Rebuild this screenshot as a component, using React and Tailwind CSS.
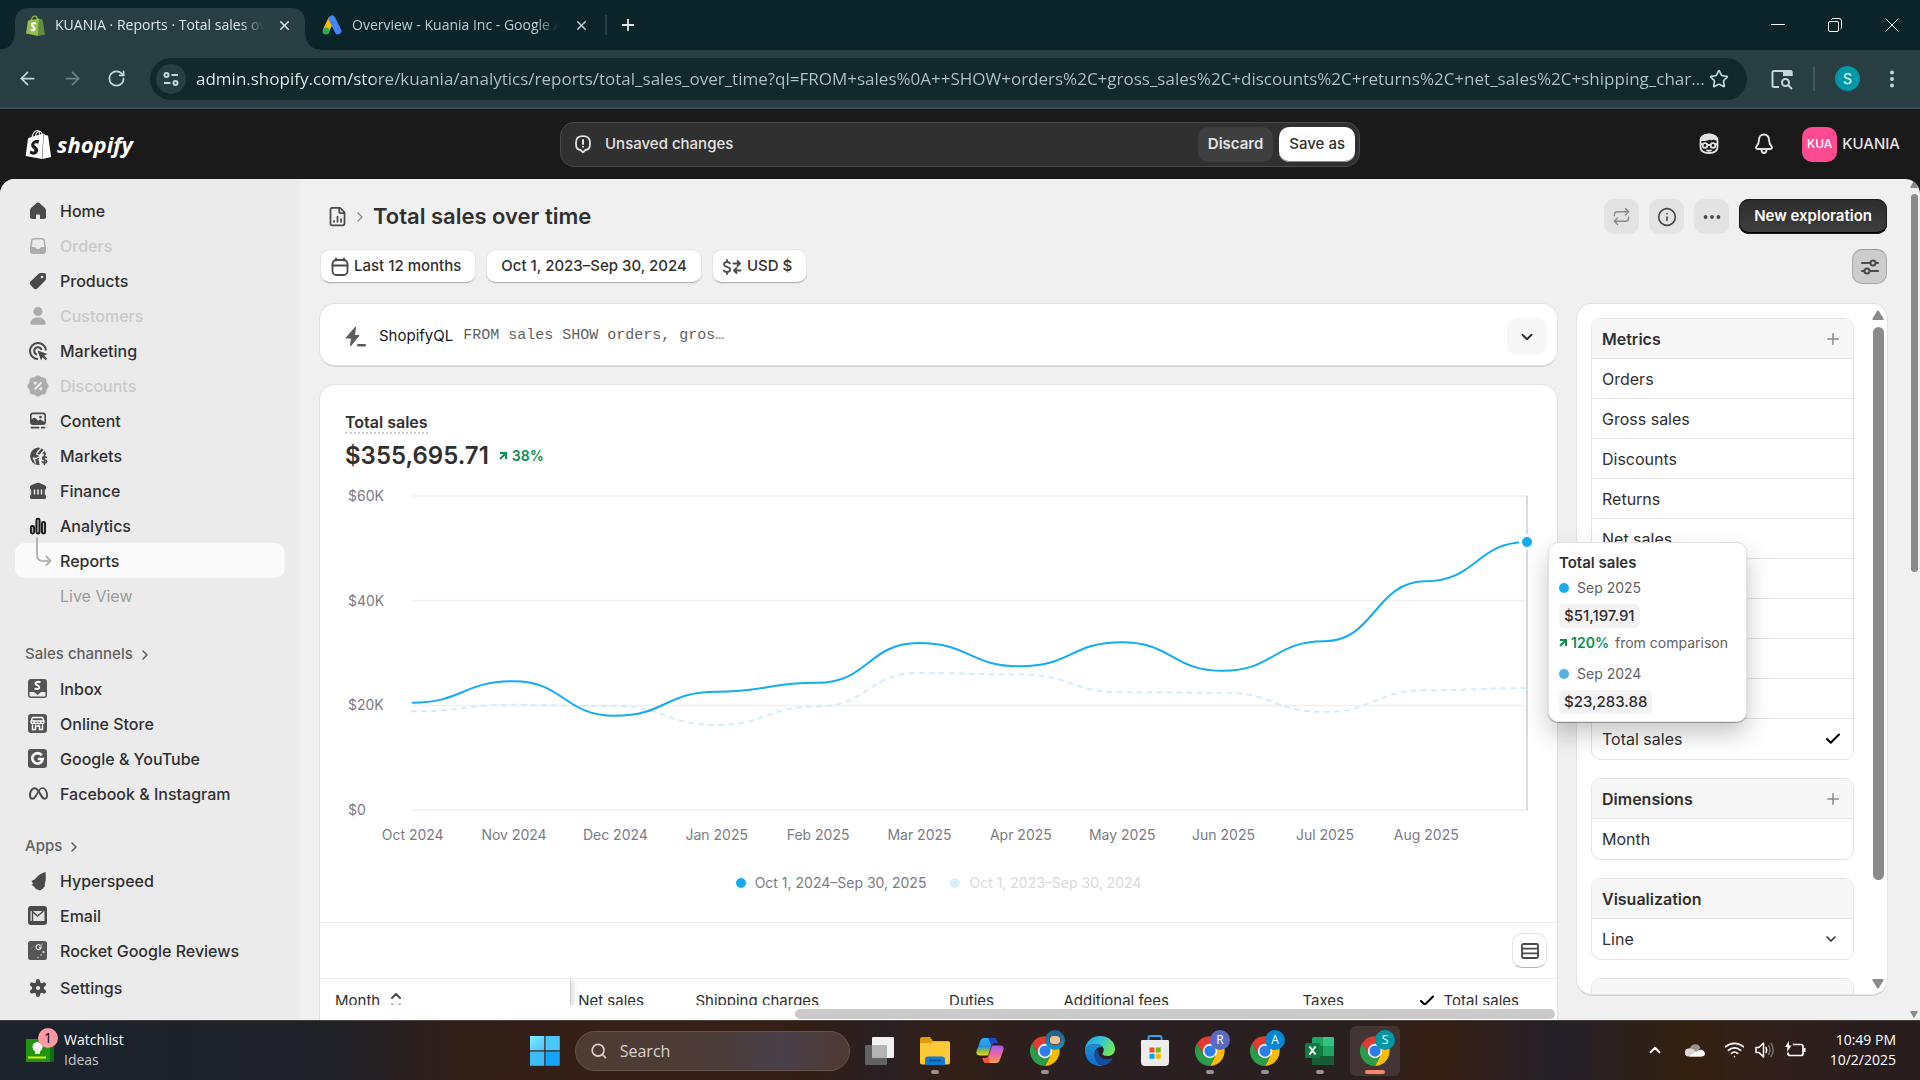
import React, { useState } from 'react';
import {
  ArrowLeft,
  ArrowRight,
  Check,
  ChevronDown,
  ChevronRight,
  ChevronUp,
  Ellipsis,
  EllipsisVertical,
  FileChartColumn,
  Info,
  Plus,
  Repeat,
  RotateCw,
  Search,
  Star,
  Wifi,
  X
} from 'lucide-react';
import { FaMeta } from 'react-icons/fa6';
import { SiShopify } from 'react-icons/si';
import { RiDiscountPercentFill } from 'react-icons/ri';

const NAV_ITEMS = [
  { label: 'Home', icon: HomeIcon },
  { label: 'Orders', icon: OrdersIcon, disabled: true },
  { label: 'Products', icon: TagIcon },
  { label: 'Customers', icon: PersonIcon, disabled: true },
  { label: 'Marketing', icon: TargetIcon },
  { label: 'Discounts', icon: DiscountIcon, disabled: true },
  { label: 'Content', icon: ContentIcon },
  { label: 'Markets', icon: MarketsIcon },
  { label: 'Finance', icon: BankIcon },
  { label: 'Analytics', icon: BarsIcon }
];

const CHANNELS = [
  { label: 'Inbox', icon: InboxIcon },
  { label: 'Online Store', icon: StoreIcon },
  { label: 'Google & YouTube', icon: GoogleIcon },
  { label: 'Facebook & Instagram', icon: MetaIcon }
];

const APPS = [
  { label: 'Hyperspeed', icon: HyperspeedIcon },
  { label: 'Email', icon: MailIcon },
  { label: 'Rocket Google Reviews', icon: RocketIcon }
];

const METRICS = [
  'Orders',
  'Gross sales',
  'Discounts',
  'Returns',
  'Net sales',
  'Shipping charges',
  'Duties',
  'Additional fees',
  'Taxes',
  'Total sales'
];

const MONTHS = [
  'Oct 2024',
  'Nov 2024',
  'Dec 2024',
  'Jan 2025',
  'Feb 2025',
  'Mar 2025',
  'Apr 2025',
  'May 2025',
  'Jun 2025',
  'Jul 2025',
  'Aug 2025'
];

const CURRENT = [20500, 24600, 18000, 22600, 24300, 31900, 27450, 32050, 26600, 32250, 43700, 51198];
const PREVIOUS = [18850, 20100, 19850, 16250, 19800, 26200, 25900, 22500, 22400, 18750, 22900, 23284];

const PLOT_W = 1115;
const PLOT_H = 314;

const toPath = (values) => {
  const step = PLOT_W / (values.length - 1);
  const y = (v) => PLOT_H - (v / 60000) * PLOT_H;
  return values.reduce((d, v, i) => {
    if (i === 0) return `M0 ${y(v)}`;
    const mid = (i - 0.5) * step;
    return `${d} C${mid} ${y(values[i - 1])} ${mid} ${y(v)} ${i * step} ${y(v)}`;
  }, '');
};

export default function App() {
  return (
    <div className="flex h-screen flex-col overflow-hidden bg-[#1a1a1a] font-['Inter',sans-serif] text-base text-[#303030]">
      <BrowserTabs />
      <BrowserToolbar />
      <AdminHeader />
      <div className="flex min-h-0 flex-1 overflow-hidden rounded-t-[15px] bg-[#f0f0f0]">
        <Sidebar />
        <Report />
        <PageScrollbar />
      </div>
      <Taskbar />
    </div>
  );
}

/* ---------- Browser ---------- */

function BrowserTabs() {
  return (
    <div className="flex h-[50px] shrink-0 items-center bg-[#0b2429] pl-[15px] font-['Open_Sans','Noto_Sans',sans-serif] text-sm text-[#dfe7e7]">
      <div className="relative flex h-[42px] w-[290px] items-center self-end rounded-t-[13px] bg-[#283e43] pb-2 pl-[11px] pr-3">
        <span className="absolute -left-[15px] bottom-0 size-[15px] bg-[radial-gradient(circle_at_0_0,transparent_14px,#283e43_15px)]" />
        <span className="absolute -right-[15px] bottom-0 size-[15px] bg-[radial-gradient(circle_at_100%_0,transparent_14px,#283e43_15px)]" />
        <ShopifyFavicon />
        <span className="ml-2.5 w-[210px] overflow-hidden whitespace-nowrap [mask-image:linear-gradient(90deg,#000_185px,transparent)]">
          KUANIA · Reports · Total sales over time
        </span>
        <button aria-label="Close tab" className="ml-3">
          <X className="size-[15px]" strokeWidth={2.4} />
        </button>
      </div>
      <div className="flex h-[42px] w-[300px] items-center self-end pb-2 pl-[17px] text-[#b9cdd0]">
        <GoogleAdsIcon />
        <span className="ml-2.5 w-[206px] overflow-hidden whitespace-nowrap [mask-image:linear-gradient(90deg,#000_185px,transparent)]">
          Overview - Kuania Inc - Google Ads
        </span>
        <button aria-label="Close tab" className="ml-4">
          <X className="size-[15px]" strokeWidth={2.4} />
        </button>
      </div>
      <span className="h-5 w-0.5 bg-[#283e43]" />
      <button aria-label="New tab" className="ml-3">
        <Plus className="size-[18px]" strokeWidth={2.4} />
      </button>
      <div className="ml-auto flex text-white">
        <button aria-label="Minimize" className="flex w-[57px] justify-center">
          <svg width="14" height="14" viewBox="0 0 14 14" stroke="currentColor">
            <path d="M0 6.5h14" />
          </svg>
        </button>
        <button aria-label="Restore" className="flex w-[57px] justify-center">
          <svg width="14" height="14" viewBox="0 0 14 14" fill="none" stroke="currentColor">
            <rect x=".5" y="3.5" width="10" height="10" rx="1.5" />
            <path d="M3.5 1.5q.3-1 1.500-1H11a2.500 2.500 0 0 1 2.500 2.500v6.500q0 1.200-1 1.500" />
          </svg>
        </button>
        <button aria-label="Close" className="flex w-[57px] justify-center">
          <svg width="14" height="14" viewBox="0 0 14 14" stroke="currentColor">
            <path d="M.5.5l13 13M13.500.5l-13 13" />
          </svg>
        </button>
      </div>
    </div>
  );
}

function BrowserToolbar() {
  return (
    <div className="flex h-[59px] shrink-0 items-center border-b-2 border-[#3e4e54] bg-[#283e43] pl-[17px] text-[#c4d6d8]">
      <button aria-label="Back">
        <ArrowLeft className="size-[21px]" />
      </button>
      <button aria-label="Forward" className="ml-6 text-[#6d8084]">
        <ArrowRight className="size-[21px]" />
      </button>
      <button aria-label="Reload" className="ml-6">
        <RotateCw className="size-[19px]" strokeWidth={2.2} />
      </button>
      <div className="ml-6 flex h-[42px] flex-1 items-center rounded-full bg-[#11282d] pl-1.5 pr-[18px]">
        <button aria-label="Site information" className="flex size-[30px] items-center justify-center rounded-full bg-[#283e43]">
          <svg width="16" height="16" viewBox="0 0 16 16" fill="none" stroke="currentColor" strokeWidth="2">
            <circle cx="3.500" cy="4" r="2" />
            <path d="M8.500 4H15M1 12h6.500" />
            <circle cx="12.500" cy="12" r="2" />
          </svg>
        </button>
        <input
          aria-label="Address"
          className="ml-2.5 min-w-0 flex-1 bg-[linear-gradient(90deg,#e9f0f0_178px,#b3c3c5_178px)] bg-clip-text font-['Open_Sans','Noto_Sans',sans-serif] text-[17px] text-transparent outline-none"
          defaultValue="admin.shopify.com/store/kuania/analytics/reports/total_sales_over_time?ql=FROM+sales%0A++SHOW+orders%2C+gross_sales%2C+discounts%2C+returns%2C+net_sales%2C+shipping_char..."
        />
        <button aria-label="Bookmark">
          <Star className="size-5" />
        </button>
      </div>
      <button aria-label="Side panel" className="ml-6">
        <svg width="22" height="22" viewBox="0 0 22 22" fill="none" stroke="currentColor" strokeWidth="2">
          <path d="M8 19H3a1.500 1.500 0 0 1-1.500-1.500v-13A1.500 1.500 0 0 1 3 3h16a1.500 1.500 0 0 1 1.500 1.500V8" />
          <path d="M12 2h7.500a2 2 0 0 1 2 2v4H12z" fill="currentColor" stroke="none" />
          <circle cx="14.500" cy="14.500" r="3.500" />
          <path d="M17 17l4 4" />
        </svg>
      </button>
      <span className="ml-5 h-6 w-0.5 bg-[#40585d]" />
      <button aria-label="Profile" className="ml-5 flex size-[25px] items-center justify-center rounded-full bg-[#0097a7] text-sm text-white">
        S
      </button>
      <button aria-label="Chrome menu" className="ml-[21px] mr-[17px]">
        <EllipsisVertical className="size-[22px]" strokeWidth={2.4} />
      </button>
    </div>
  );
}

/* ---------- Shopify admin ---------- */

function AdminHeader() {
  return (
    <header className="grid h-[70px] shrink-0 grid-cols-[1fr_auto_1fr] items-center bg-[#1a1a1a] px-5 text-[#e3e3e3]">
      <a href="#" className="flex items-center gap-1 pl-1 text-white">
        <SiShopify className="size-[29px]" />
        <span className="font-['Open_Sans','Noto_Sans',sans-serif] text-[22px] font-bold italic leading-8">shopify</span>
      </a>
      <div className="flex h-[45px] w-[800px] items-center rounded-[14px] border border-[#4a4a4a] bg-[#303030] pl-3 pr-1 text-[15px]">
        <svg width="20" height="20" viewBox="0 0 20 20" fill="none" stroke="currentColor" strokeWidth="1.800" strokeLinecap="round">
          <path d="M10 2.200c5.200 0 7 1.800 7 7s-1.200 6.300-4.500 6.800L10 18.300 7.500 16C4.200 15.500 3 14.400 3 9.200s1.800-7 7-7z" strokeLinejoin="round" />
          <path d="M10 6v4M10 12.700v.1" strokeWidth="2" />
        </svg>
        <span className="ml-3 font-medium">Unsaved changes</span>
        <button className="ml-auto h-[35px] rounded-[10px] bg-[#3f3f3f] px-2.5 font-semibold">Discard</button>
        <button className="ml-1.5 h-[35px] rounded-[10px] bg-white px-2.5 font-medium text-[#303030] shadow-[inset_0_-1px_0_#8a8a8a]">
          Save as
        </button>
      </div>
      <div className="flex items-center justify-end">
        <button aria-label="Sidekick">
          <SidekickIcon />
        </button>
        <button aria-label="Notifications" className="ml-[35px]">
          <svg width="20" height="22" viewBox="0 0 20 22" fill="none" stroke="currentColor" strokeWidth="1.900" strokeLinejoin="round">
            <path d="M10 1.500c-3 0-5 2.200-5 5.200 0 3.200-.8 4.800-2.600 6.800-.7.800-.3 2.500 1 2.500h13.200c1.300 0 1.700-1.700 1-2.500-1.800-2-2.600-3.600-2.600-6.800 0-3-2-5.200-5-5.200z" />
            <path d="M7.500 16.500c0 1.800.9 3.500 2.500 3.500s2.500-1.700 2.500-3.500" />
          </svg>
        </button>
        <button className="ml-7 flex items-center gap-[5px] text-[15px] font-medium">
          <span className="flex size-[35px] items-center justify-center rounded-[10px] bg-[#fd4b92] text-xs font-medium text-white">KUA</span>
          KUANIA
        </button>
      </div>
    </header>
  );
}

function NavRow({ item }) {
  const Icon = item.icon;
  return (
    <a
      href="#"
      className={`flex h-[35px] items-center gap-3 rounded-[10px] pl-[13px] font-medium ${item.disabled ? 'text-[#c9c9c9]' : 'text-[#303030]'}`}
    >
      <span className={`flex size-5 items-center justify-center ${item.disabled ? 'text-[#acacac]' : 'text-[#4a4a4a]'}`}>
        <Icon />
      </span>
      {item.label}
    </a>
  );
}

function SectionLabel({ children }) {
  return (
    <button className="flex h-[35px] items-center gap-1 pl-2.5 pt-0.5 text-[15px] font-medium text-[#616161]">
      {children}
      <ChevronRight className="size-4" strokeWidth={2.4} />
    </button>
  );
}

function Sidebar() {
  return (
    <nav className="flex w-[300px] shrink-0 flex-col overflow-hidden bg-[#ebebeb] px-[15px] pt-3.5">
      {NAV_ITEMS.map((item) => (
        <NavRow key={item.label} item={item} />
      ))}
      <a href="#" className="relative flex h-[35px] items-center rounded-[10px] bg-[#fafafa] pl-[45px] font-medium">
        <svg className="absolute -top-1.5 left-[21px]" width="18" height="30" viewBox="0 0 18 30" fill="none" stroke="#b5b5b5" strokeWidth="2" strokeLinecap="round" strokeLinejoin="round">
          <path d="M1 1v17q0 6 6 6h7.500M10.500 19.500l4 4.500-4 4" />
        </svg>
        Reports
      </a>
      <a href="#" className="flex h-[35px] items-center pl-[45px] text-[#9b9b9b]">
        Live View
      </a>
      <div className="mt-[23px] flex flex-col">
        <SectionLabel>Sales channels</SectionLabel>
        {CHANNELS.map((item) => (
          <NavRow key={item.label} item={item} />
        ))}
      </div>
      <div className="mt-[17px] flex flex-col">
        <SectionLabel>Apps</SectionLabel>
        {APPS.map((item) => (
          <NavRow key={item.label} item={item} />
        ))}
      </div>
      <div className="mt-0.5">
        <NavRow item={{ label: 'Settings', icon: GearIcon }} />
      </div>
    </nav>
  );
}

const cardShadow = 'shadow-[0_0_0_1px_#e3e3e3,0_2px_0_0_#cfcfcf]';
const pill =
  'flex h-[35px] items-center rounded-[10px] bg-white text-[15px] font-medium shadow-[inset_0_0_0_1px_#e3e3e3,inset_0_-2px_0_#b5b5b5]';
const iconButton = 'flex size-[35px] items-center justify-center rounded-[10px] bg-[#e3e3e3]';

function Report() {
  return (
    <main className="flex min-w-0 flex-1 flex-col pl-5 pr-[21px] pt-5">
      <div className="flex h-[35px] shrink-0 items-center">
        <a href="#" aria-label="Reports" className="ml-[7px] text-[#4a4a4a]">
          <FileChartColumn className="size-[21px]" />
        </a>
        <ChevronRight className="ml-1 size-4 text-[#8a8a8a]" />
        <h1 className="ml-[5px] text-[22px] font-semibold">Total sales over time</h1>
        <div className="ml-auto flex gap-2.5">
          <button aria-label="Refresh" className={iconButton} disabled>
            <Repeat className="size-[19px] text-[#8a8a8a]" strokeWidth={1.8} />
          </button>
          <button aria-label="About this report" className={iconButton}>
            <Info className="size-5 text-[#4a4a4a]" />
          </button>
          <button aria-label="More actions" className={iconButton}>
            <Ellipsis className="size-[22px] text-[#4a4a4a]" strokeWidth={2.2} />
          </button>
          <button className="h-[35px] rounded-[10px] bg-linear-to-b from-[#2c2c2c] to-[#404040] px-[15px] text-[15px] font-semibold text-white shadow-[inset_0_0_0_1px_#1a1a1a,inset_0_-2px_0_#000]">
            New exploration
          </button>
        </div>
      </div>

      <div className="mt-[15px] flex shrink-0 gap-2.5">
        <button className={`${pill} gap-[5px] px-[11px] pr-[15px]`}>
          <CalendarIcon />
          Last 12 months
        </button>
        <button className={`${pill} px-[15px]`}>Oct 1, 2023–Sep 30, 2024</button>
        <button className={`${pill} gap-[5px] px-[11px] pr-[15px]`}>
          <CurrencyIcon />
          USD $
        </button>
        <button aria-label="Configuration" className="ml-auto flex size-[35px] items-center justify-center rounded-[10px] border border-[#a8a8a8] border-t-[#9a9a9a] bg-[#cccccc]">
          <svg width="20" height="20" viewBox="0 0 20 20" fill="none" stroke="#4a4a4a" strokeWidth="2" strokeLinecap="round">
            <path d="M2 6h8M16 6h2M2 14h2M10 14h8" />
            <circle cx="13" cy="6" r="2.500" />
            <circle cx="7" cy="14" r="2.500" />
          </svg>
        </button>
      </div>

      <div className="mt-5 flex min-h-0 flex-1 gap-5">
        <div className="relative z-10 flex min-w-0 flex-1 flex-col gap-5">
          <QueryCard />
          <ChartCard />
        </div>
        <ConfigPanel />
      </div>
    </main>
  );
}

function QueryCard() {
  return (
    <section className={`flex h-[61px] shrink-0 items-center rounded-[15px] bg-white pl-[25px] pr-2.5 pt-1 ${cardShadow}`}>
      <svg width="22" height="20" viewBox="0 0 22 20" fill="#5c5c5c">
        <path d="M10.500 0L1 11h5.500L5.500 19 14 8.500H9.500z" stroke="#5c5c5c" strokeLinejoin="round" />
        <rect x="12" y="17" width="9" height="2.500" rx="1.200" />
      </svg>
      <span className="ml-3 text-[15px] text-[#1a1a1a]">ShopifyQL</span>
      <code className="ml-2.5 font-['Liberation_Mono',monospace] text-[15px] text-[#616161]">FROM sales SHOW orders, gros…</code>
      <button aria-label="Expand query" className="ml-auto flex h-[37px] w-10 items-center justify-center rounded-[10px] bg-[#f7f7f7]">
        <ChevronDown className="size-[18px]" strokeWidth={2.6} />
      </button>
    </section>
  );
}

function ChartCard() {
  return (
    <section className={`flex min-h-0 flex-1 flex-col rounded-t-[15px] bg-white ${cardShadow}`}>
      <div className="shrink-0 px-[25px] pt-[27px]">
        <h2 className="w-fit border-b-2 border-dotted border-[#cccccc] leading-5 font-semibold">Total sales</h2>
        <div className="mt-1.5 flex h-8 items-center gap-2.5">
          <span className="text-2xl font-semibold">$355,695.71</span>
          <span className="flex items-center gap-[5px] text-sm font-semibold text-[#0a8f4f]">
            <TrendArrow />
            38%
          </span>
        </div>
      </div>

      <div className="mt-6 flex shrink-0 pl-7 pr-[30px] text-sm text-[#7b7b85]">
        <div className="-my-2.5 flex w-16 shrink-0 flex-col justify-between">
          <span>$60K</span>
          <span>$40K</span>
          <span>$20K</span>
          <span>$0</span>
        </div>
        <div className="relative flex-1">
          <svg className="block h-[314px] w-full overflow-visible" viewBox={`0 0 ${PLOT_W} ${PLOT_H}`} preserveAspectRatio="none" fill="none">
            {[0, 104.5, 209.5, 314].map((y) => (
              <path key={y} d={`M0 ${y}H${PLOT_W}`} stroke="#efefef" strokeWidth="1.500" />
            ))}
            <path d={`M${PLOT_W} 0V${PLOT_H}`} stroke="#d9d9d9" strokeWidth="2" />
            <path d={toPath(PREVIOUS)} stroke="#d3ecfb" strokeWidth="2" strokeDasharray="4 6" strokeLinecap="round" />
            <path d={toPath(CURRENT)} stroke="#13acf0" strokeWidth="2" />
            <circle cx={PLOT_W} cy="46" r="6.500" fill="#13acf0" stroke="#fff" strokeWidth="3" />
          </svg>
          <ChartTooltip />
        </div>
      </div>

      <div className="ml-[42px] mr-20 mt-[15px] flex shrink-0 text-center text-sm text-[#7b7b85]">
        {MONTHS.map((month) => (
          <span key={month} className="flex-1 whitespace-nowrap">
            {month}
          </span>
        ))}
      </div>

      <div className="mt-7 flex shrink-0 justify-center gap-6 pb-[29px] text-sm text-[#7b7b85]">
        <span className="flex items-center gap-[9px]">
          <i className="size-2.5 rounded-full bg-[#13acf0]" />
          Oct 1, 2024–Sep 30, 2025
        </span>
        <span className="flex items-center gap-[9px] text-[#d9d9db]">
          <i className="size-2.5 rounded-full bg-[#d9eefb]" />
          Oct 1, 2023–Sep 30, 2024
        </span>
      </div>

      <div className="flex shrink-0 justify-end border-t border-[#ebebeb] p-2.5">
        <button aria-label="Table layout" className="flex size-[35px] items-center justify-center rounded-[10px] border border-[#e3e3e3] border-b-[#b5b5b5]">
          <svg width="18" height="16" viewBox="0 0 18 16" fill="none" stroke="#4a4a4a" strokeWidth="1.800">
            <rect x="1" y="1" width="16" height="14" rx="1.500" />
            <path d="M1 5.700h16M1 10.300h16" />
          </svg>
        </button>
      </div>

      <div className="min-h-0 flex-1 overflow-hidden border-t border-[#ebebeb]">
        <table className="w-full table-fixed text-[15px]">
          <thead>
            <tr className="h-11 text-right">
              <th className="pl-[15px] text-left font-normal shadow-[1px_0_0_#d0d0d0,3px_0_6px_#d9d9d9]">
                <span className="flex items-center gap-2.5">
                  Month
                  <svg width="12" height="16" viewBox="0 0 12 16" fill="none" strokeWidth="2" strokeLinecap="round" strokeLinejoin="round">
                    <path d="M2 5l4-4 4 4" stroke="#4a4a4a" />
                    <path d="M2 11l4 4 4-4" stroke="#b5b5b5" />
                  </svg>
                </span>
              </th>
              <th className="w-[82px] pr-2 font-normal">Net sales</th>
              <th className="w-[175px] pr-2 font-normal">Shipping charges</th>
              <th className="w-[175px] pr-2 font-normal">Duties</th>
              <th className="w-[175px] pr-2 font-normal">Additional fees</th>
              <th className="w-[175px] pr-2 font-normal">Taxes</th>
              <th className="w-[205px] pr-[38px] font-normal">
                <span className="flex items-center justify-end gap-2">
                  <Check className="size-[18px] text-black" strokeWidth={2.8} />
                  Total sales
                </span>
              </th>
            </tr>
          </thead>
        </table>
      </div>
      <div className="flex h-[15px] shrink-0 items-end justify-end pb-px pr-0.5">
        <span className="h-2.5 w-8/13 rounded-full bg-[#c9c9c9]" />
      </div>
    </section>
  );
}

function ChartTooltip() {
  return (
    <div className="absolute left-full top-[46px] ml-[21px] flex w-[199px] flex-col rounded-[10px] border border-[#e3e3e3] bg-white px-2.5 pb-[7px] pt-2.5 text-sm text-[#616161] shadow-[0_1px_1px_rgba(0,0,0,0.3),0_12px_24px_rgba(0,0,0,0.22)]">
      <span className="text-[15px] font-semibold leading-5 text-[#303030]">Total sales</span>
      <span className="mt-[5px] flex items-center gap-2">
        <i className="size-2.5 rounded-full bg-[#13acf0]" />
        Sep 2025
      </span>
      <span className="mt-1.5 w-fit rounded-[5px] bg-[#f3f3f3] px-[5px] text-[15px] font-medium leading-6 text-[#303030]">$51,197.91</span>
      <span className="mt-[5px] flex items-center">
        <TrendArrow />
        <b className="ml-1 font-semibold text-[#0a8f4f]">120%</b>
        <span className="ml-1.5">from comparison</span>
      </span>
      <span className="mt-[11px] flex items-center gap-2">
        <i className="size-2.5 rounded-full bg-[#52b3e3]" />
        Sep 2024
      </span>
      <span className="mt-1.5 w-fit rounded-[5px] bg-[#f3f3f3] px-[5px] text-[15px] font-medium leading-6 text-[#303030]">$23,283.88</span>
    </div>
  );
}

const panelBox = 'shrink-0 divide-y divide-[#e3e3e3] overflow-hidden rounded-[10px] border border-[#e3e3e3] bg-white';
const panelHead = 'flex h-10 items-center justify-between bg-[#f7f7f7] pl-2.5 pr-[11px] font-semibold';

function ConfigPanel() {
  const [chart, setChart] = useState('Line');

  return (
    <aside className={`mb-[26px] flex w-[310px] shrink-0 overflow-hidden rounded-[15px] bg-white ${cardShadow}`}>
      <div className="flex flex-1 flex-col gap-[18px] overflow-hidden pl-3.5 pt-3.5">
        <div className={panelBox}>
          <div className={panelHead}>
            Metrics
            <button aria-label="Add metric">
              <Plus className="size-[18px] text-[#8a8a8a]" />
            </button>
          </div>
          {METRICS.map((metric) => (
            <button key={metric} className="flex h-10 w-full items-center justify-between pl-2.5 pr-[11px] text-left">
              {metric}
              {metric === 'Total sales' && <Check className="size-[18px] text-black" strokeWidth={2.8} />}
            </button>
          ))}
        </div>

        <div className={panelBox}>
          <div className={panelHead}>
            Dimensions
            <button aria-label="Add dimension">
              <Plus className="size-[18px] text-[#8a8a8a]" />
            </button>
          </div>
          <button className="flex h-10 w-full items-center pl-2.5">Month</button>
        </div>

        <div className={panelBox}>
          <label htmlFor="visualization" className={panelHead}>
            Visualization
          </label>
          <div className="relative flex h-10 items-center">
            <select
              id="visualization"
              value={chart}
              onChange={(e) => setChart(e.target.value)}
              className="h-full w-full appearance-none pl-2.5 outline-none"
            >
              <option>Line</option>
              <option>Bar</option>
            </select>
            <ChevronDown className="pointer-events-none absolute right-3.5 size-4" strokeWidth={2.4} />
          </div>
        </div>

        <div className={panelBox}>
          <div className="h-10 bg-[#f7f7f7]" />
        </div>
      </div>
      <div className="flex w-[33px] flex-col items-center pb-[5px] pl-4 pr-px pt-1.5 text-[#8a8a8a]">
        <Triangle className="h-2.5 w-3" />
        <span className="mt-[7px] w-[11px] flex-1 rounded-full bg-[#8a8a8a]" />
        <Triangle className="mt-[99px] h-2.5 w-3 rotate-180" />
      </div>
    </aside>
  );
}

function PageScrollbar() {
  return (
    <div className="flex w-3 shrink-0 flex-col items-center pb-0.5 pt-0.5 text-[#8a8a8a]">
      <Triangle className="h-[7px] w-2" />
      <span className="mt-1.5 h-[378px] w-[7px] rounded-full bg-[#8a8a8a]" />
      <Triangle className="mt-auto h-[7px] w-2 rotate-180" />
    </div>
  );
}

/* ---------- Taskbar ---------- */

function Taskbar() {
  return (
    <footer className="grid h-[60px] shrink-0 grid-cols-[1fr_auto_1fr] items-center border-t border-[#47413f] bg-[linear-gradient(90deg,#1b232c_0%,#1e222a_12%,#222128_18%,#321f18_24%,#371f16_36%,#331e16_42%,#2a2024_46%,#331f17_49%,#2a1f21_56%,#2a2020_70%,#371f14_75%,#25212a_81%,#33200f_88%,#33201a_91%,#2a1d1e_97%)] font-['Open_Sans','Noto_Sans',sans-serif] text-sm text-white">
      <button className="flex items-center gap-2.5 pb-0.5 pl-[26px] text-left leading-5">
        <span className="relative flex h-[27px] w-7 items-end">
          <svg width="28" height="24" viewBox="0 0 28 24">
            <rect x="2" y="1" width="26" height="22" rx="1" fill="#0f6b17" />
            <rect width="24" height="23" rx="1" fill="#23940f" />
            <circle cx="11.500" cy="8" r="5" fill="#fff" />
            <rect x="9" y="11" width="5" height="4" rx="1" fill="#e9ffe5" />
            <rect x="2" y="17.500" width="18" height="2" fill="#d8f000" />
          </svg>
          <span className="absolute -top-2 left-3 flex size-5 items-center justify-center rounded-full bg-[#ff99a4] text-sm text-black">1</span>
        </span>
        <span>
          Watchlist
          <span className="block text-[#c5c7ca]">Ideas</span>
        </span>
      </button>

      <div className="flex items-center gap-[5px]">
        <TaskCell label="Start">
          <svg width="30" height="30" viewBox="0 0 30 30">
            <defs>
              <linearGradient id="win" x1="0" y1="0" x2="1" y2="1">
                <stop stopColor="#7cf0ff" />
                <stop offset="1" stopColor="#4cc2ff" />
              </linearGradient>
            </defs>
            <rect width="14.300" height="14.300" fill="url(#win)" />
            <rect x="15.500" width="14.300" height="14.300" fill="#47c6fb" />
            <rect y="15.500" width="14.300" height="14.300" fill="#3dbcfa" />
            <rect x="15.500" y="15.500" width="14.300" height="14.300" fill="#16a2fb" />
          </svg>
        </TaskCell>
        <label className="flex h-10 w-[275px] items-center gap-3 rounded-full border border-[#67544d] bg-[linear-gradient(90deg,#4f3b33,#4c3c38_50%,#49404a_75%,#503a33)] pl-3.5">
          <Search className="size-5 text-[#d9d2cf]" strokeWidth={2.2} />
          <input aria-label="Search" placeholder="Search" className="w-full text-base outline-none placeholder:text-[#d9d2cf]" />
        </label>
        <TaskCell label="Task view">
          <svg width="30" height="30" viewBox="0 0 30 30">
            <rect y="9" width="22" height="20" rx="1" fill="#636363" />
            <rect x="7" y="1" width="22" height="21" rx="1" fill="#f2f2f2" />
            <path d="M7 9h15v13H7z" fill="#b4b4b4" />
          </svg>
        </TaskCell>
        <TaskCell label="File Explorer" open>
          <svg width="30" height="28" viewBox="0 0 30 28">
            <path d="M0 2a2 2 0 0 1 2-2h8l3 4h15a2 2 0 0 1 2 2v6H0z" fill="#e09b0b" />
            <path d="M0 6h11l2-1.500h15.500A1.500 1.500 0 0 1 30 6v19.500a2 2 0 0 1-2 2H2a2 2 0 0 1-2-2z" fill="#fdc936" />
            <path d="M5 28v-5.500a3 3 0 0 1 3-3h14a3 3 0 0 1 3 3V28z" fill="#1179cf" />
            <path d="M9 23.500h12" stroke="#0b4f90" strokeWidth="1.500" />
          </svg>
        </TaskCell>
        <TaskCell label="Copilot">
          <CopilotIcon />
        </TaskCell>
        <TaskCell label="Chrome" open>
          <ChromeIcon />
          <span className="absolute right-[5px] top-1 flex size-5 items-center justify-center rounded-full bg-linear-to-b from-[#1d5c86] to-[#0a9ad2]">
            <span className="h-2.5 w-3 rounded-sm border border-[#6d4a33] bg-[#e3c49c]" />
          </span>
        </TaskCell>
        <TaskCell label="Edge">
          <EdgeIcon />
        </TaskCell>
        <TaskCell label="Microsoft Store">
          <svg width="28" height="32" viewBox="0 0 28 32">
            <path d="M7.500 7V2.500Q7.500 1 9 1h10q1.500 0 1.500 1.500V7" fill="none" stroke="#2aa6ee" strokeWidth="2" />
            <path d="M0 6q0-1 1-1h26q1 0 1 1v21a4 4 0 0 1-4 4H4a4 4 0 0 1-4-4z" fill="#ececec" />
            <path d="M8.500 12.500h5v5h-5z" fill="#f25022" />
            <path d="M14.700 12.500h5v5h-5z" fill="#7fba00" />
            <path d="M8.500 18.800h5v5h-5z" fill="#00a4ef" />
            <path d="M14.700 18.800h5v5h-5z" fill="#ffb900" />
          </svg>
        </TaskCell>
        <TaskCell label="Chrome profile R" open>
          <ChromeIcon />
          <span className="absolute right-[5px] top-1 flex size-5 items-center justify-center rounded-full bg-[#5c6bc0] text-xs">R</span>
        </TaskCell>
        <TaskCell label="Chrome profile A" open>
          <ChromeIcon />
          <span className="absolute right-[5px] top-1 flex size-5 items-center justify-center rounded-full bg-[#0288d1] text-xs">A</span>
        </TaskCell>
        <TaskCell label="Excel" open>
          <svg width="30" height="28" viewBox="0 0 30 28">
            <rect x="7" width="22" height="28" rx="1.500" fill="#21a366" />
            <path d="M18 0h9.500A1.500 1.500 0 0 1 29 1.500V9H18z" fill="#33c481" />
            <path d="M7 9h11v10H7z" fill="#107c41" />
            <path d="M7 19h22v7.500a1.500 1.500 0 0 1-1.500 1.500h-19A1.500 1.500 0 0 1 7 26.500z" fill="#185c37" />
            <rect y="6" width="15" height="15" rx="1.500" fill="#117a41" />
            <path d="M4.500 9.500l6 8M10.500 9.500l-6 8" stroke="#fff" strokeWidth="2" />
          </svg>
        </TaskCell>
        <TaskCell label="Chrome profile S" active>
          <ChromeIcon />
          <span className="absolute right-[5px] top-1 flex size-5 items-center justify-center rounded-full bg-[#0097a7] text-xs">S</span>
        </TaskCell>
      </div>

      <div className="flex items-center justify-end pb-0.5 pr-6">
        <button aria-label="Show hidden icons">
          <ChevronUp className="size-[18px]" strokeWidth={2.4} />
        </button>
        <svg className="ml-[21px]" width="20" height="14" viewBox="0 0 20 14">
          <path d="M5 5a5.500 5.500 0 0 1 10.500 0l-6 6z" fill="#9b9290" />
          <path d="M4 13.500a4 4 0 0 1-.5-8C5 5 6 5 8 6.200l8.500 7.300z" fill="#d9d6d5" />
          <path d="M4 13.500l9-6c3.500-2 7 .5 7 3.200 0 1.500-1.200 2.800-3 2.800z" fill="#fff" />
        </svg>
        <Wifi className="ml-[19px] size-[21px]" />
        <svg className="ml-2.5" width="20" height="18" viewBox="0 0 20 18" fill="none" stroke="currentColor" strokeWidth="1.500" strokeLinecap="round" strokeLinejoin="round">
          <path d="M1 6.500h3L8.500 2v14L4 11.500H1z" />
          <path d="M11 6.500q1.500 2.500 0 5" />
          <path d="M13.500 4.500q3 4.500 0 9M16 2.500q4.500 6.500 0 13" stroke="#76706e" />
        </svg>
        <svg className="ml-2.5" width="21" height="18" viewBox="0 0 21 18" fill="none" stroke="currentColor" strokeWidth="1.700" strokeLinejoin="round">
          <path d="M8 3.500h8a2 2 0 0 1 2 2v7a2 2 0 0 1-2 2H5a2 2 0 0 1-2-2v-1" />
          <path d="M19 7h1.500v4H19z" fill="currentColor" stroke="none" />
          <path d="M4 0L0 6h2.500L2 11l4.500-6.500H4z" fill="currentColor" stroke="none" />
        </svg>
        <button className="ml-6 text-right leading-5">
          10:49 PM
          <span className="block">10/2/2025</span>
        </button>
      </div>
    </footer>
  );
}

function TaskCell({ label, open, active, children }) {
  return (
    <button
      aria-label={label}
      className={`relative flex size-[50px] items-center justify-center rounded-md ${active ? 'bg-[#423533]' : ''}`}
    >
      {children}
      {open && <span className="absolute bottom-0.5 h-1 w-2 rounded-full bg-[#9a9190]" />}
      {active && <span className="absolute bottom-0.5 h-1 w-5 rounded-full bg-[#fb8468]" />}
    </button>
  );
}

/* ---------- Icons ---------- */

function Triangle({ className }) {
  return (
    <svg className={className} viewBox="0 0 12 10" fill="currentColor" preserveAspectRatio="none">
      <path d="M5 1.200a1.200 1.200 0 0 1 2 0l4.500 7.300q.5 1.500-1 1.500h-9q-1.500 0-1-1.500z" />
    </svg>
  );
}

function TrendArrow() {
  return (
    <svg width="8" height="8" viewBox="0 0 8 8" fill="none" stroke="#0a8f4f" strokeWidth="2">
      <path d="M1 1h6v6M6.500 1.500L1 7" />
    </svg>
  );
}

function CalendarIcon() {
  return (
    <svg width="18" height="20" viewBox="1 0 18 20" fill="none" stroke="#4a4a4a" strokeWidth="1.800" strokeLinecap="round">
      <path d="M6 1.500v2M14 1.500v2M2.500 8.500h15" />
      <rect x="2.500" y="3" width="15" height="15" rx="4" />
    </svg>
  );
}

function CurrencyIcon() {
  return (
    <svg width="19" height="20" viewBox="1 0 19 20" fill="none" stroke="#4a4a4a" strokeWidth="1.800" strokeLinecap="round" strokeLinejoin="round">
      <path d="M8 6.500C7.500 5.300 6.500 5 5 5S2 5.800 2 7.300s1.200 2 3 2.500 3.200 1.200 3.200 2.700S6.700 15 5 15s-3-.5-3.300-1.700M5 3v2M5 15v2" />
      <path d="M11.500 6.500H18M15.500 4L18 6.500 15.500 9M18.500 13.500H12M14.500 11L12 13.500l2.500 2.500" />
    </svg>
  );
}

function ShopifyFavicon() {
  return (
    <svg width="19" height="21" viewBox="0 0 19 21">
      <path d="M2 5.500L13 3.500 12.500 21 0 18.600z" fill="#95bf47" />
      <path d="M13 3.500l3.500 1L19 19.500 12.500 21z" fill="#5e8e3e" />
      <path d="M5 5.500C6 2 8 .8 9.500 1.200S11.500 4 11.500 5" fill="none" stroke="#95bf47" strokeWidth="1.200" />
      <path d="M9.800 8.600C8 7.600 5.800 8.300 5.900 10c.1 1.500 2.800 1.800 2.800 3.600 0 1.700-2 2.200-3.900 1" fill="none" stroke="#fff" strokeWidth="2" />
    </svg>
  );
}

function GoogleAdsIcon() {
  return (
    <svg width="20" height="20" viewBox="0 0 20 20">
      <path d="M9.500 4L4 15.500" stroke="#fbbc04" strokeWidth="6.500" />
      <path d="M10 3.800l6 12.200" stroke="#4285f4" strokeWidth="6.800" strokeLinecap="round" />
      <circle cx="4" cy="16" r="3.500" fill="#34a853" />
    </svg>
  );
}

function SidekickIcon() {
  return (
    <svg width="20" height="22" viewBox="0 0 20 22" fill="none" stroke="currentColor" strokeWidth="1.800">
      <path d="M1.500 9.500V8C1.500 3.500 5 1.500 10 1.500S18.500 4 18.500 8v6c0 4-3.500 6-8.500 6S1.500 18 1.500 14z" />
      <path d="M1 8C1 3 5.500.8 10 .8S19.500 3 19 7.500c-1.500.5-3 .2-4-1.200-1.800 1.500-3.300 1.200-4.200.2C8.500 8.200 5 8 3.500 8z" fill="currentColor" stroke="none" />
      <circle cx="6" cy="12.500" r="2.300" />
      <circle cx="14" cy="12.500" r="2.300" />
      <path d="M1.500 11L4 11.500M16 11.500l2.500-.5M8 12h4M7.500 17q2.500 1.500 5 0" />
    </svg>
  );
}

function Glyph({ children, ...rest }) {
  return (
    <svg width="20" height="20" viewBox="0 0 20 20" fill="currentColor" {...rest}>
      {children}
    </svg>
  );
}

function HomeIcon() {
  return (
    <Glyph>
      <path d="M2 9.400c0-.9.400-1.700 1-2.300l5.400-4.800a2.400 2.400 0 0 1 3.200 0L17 7.100c.6.600 1 1.400 1 2.300V15.500A2.500 2.500 0 0 1 15.500 18H12v-3.500a1 1 0 0 0-1-1H9a1 1 0 0 0-1 1V18H4.500A2.500 2.500 0 0 1 2 15.500z" />
    </Glyph>
  );
}

function OrdersIcon() {
  return (
    <Glyph fillRule="evenodd">
      <path d="M6 2h8a3 3 0 0 1 3 2.500l1 7V15a3 3 0 0 1-3 3H5a3 3 0 0 1-3-3v-3.500l1-7A3 3 0 0 1 6 2zm0 1.600c-.8 0-1.300.4-1.400 1.200L3.700 11H6.500c1 0 1.200 2 3.500 2s2.500-2 3.500-2h2.800l-.9-6.200c-.1-.8-.6-1.200-1.400-1.200z" />
    </Glyph>
  );
}

function TagIcon() {
  return (
    <Glyph fillRule="evenodd">
      <path d="M10.600 2.700c.5-.5 1.200-.7 1.900-.7H16a2 2 0 0 1 2 2v3.600c0 .7-.3 1.400-.8 1.900l-7.600 7.700a2.800 2.800 0 0 1-4 0l-2.800-2.900a2.800 2.800 0 0 1 0-4zM14 4.700a1.300 1.300 0 1 0 0 2.600 1.300 1.300 0 0 0 0-2.600z" />
    </Glyph>
  );
}

function PersonIcon() {
  return (
    <Glyph>
      <circle cx="10" cy="5.500" r="4.500" />
      <path d="M2.300 17c.7-3.500 3.500-5.500 7.700-5.500s7 2 7.700 5.500q.3 1.800-1.500 1.800H3.800q-1.800 0-1.500-1.800z" />
    </Glyph>
  );
}

function TargetIcon() {
  return (
    <Glyph fill="none" stroke="currentColor" strokeWidth="2">
      <path d="M18 9.500A8 8 0 1 0 10 18" />
      <path d="M13.500 9A3.700 3.700 0 1 0 9 13.500" />
      <path d="M9.500 9.500l10 3.500-3.300 1.600 3 3.200-1.500 1.500-3.100-3.100L13 19.500z" fill="currentColor" stroke="none" />
    </Glyph>
  );
}

function DiscountIcon() {
  return <RiDiscountPercentFill className="size-6 shrink-0" />;
}

function ContentIcon() {
  return (
    <Glyph fillRule="evenodd">
      <path d="M5 1.500h10a3 3 0 0 1 3 3V11a3 3 0 0 1-3 3H5a3 3 0 0 1-3-3V4.500a3 3 0 0 1 3-3zM5 3.200c-.9 0-1.400.6-1.400 1.400v3.600L5.500 7c.8-.5 1.600-.4 2.200.2l2.500 2.500 1-.8c.6-.5 1.500-.5 2.100 0l3.100 2V4.600c0-.8-.6-1.400-1.400-1.400zm7.500 1.500a1.400 1.400 0 1 1 0 2.800 1.400 1.400 0 0 1 0-2.800z" />
      <rect x="2.500" y="15.700" width="9" height="1.800" rx=".9" />
      <rect x="12.800" y="15.700" width="4.700" height="1.800" rx=".9" />
    </Glyph>
  );
}

function MarketsIcon() {
  return (
    <Glyph>
      <path d="M10 1.500A8.800 8.800 0 0 0 10 19c.8 0 1.500-.1 2-.3-.8-.6-1-1.600-.8-2.400-.9-1.200-.9-2.800 0-3.800-.5-1.500.2-3.300 2-4l.3-1c1.300-.3 2.400.2 3 1.200l1.900.3A8.800 8.800 0 0 0 10 1.500z" />
      <path d="M13 2.200C10.500 4.500 9.500 6 8.500 8l3 1.500 5-5.500M7.500 17.500q-.5-4-2.500-5.500l3 .5 3.500-2" stroke="#ebebeb" strokeWidth="1.300" fill="none" />
      <path d="M18.300 11.500c-.5-1-3.800-1.300-3.800.6 0 2 4 1.200 4 3.300 0 2-3.700 1.800-4.300.4M16.400 9v9.500" fill="none" stroke="currentColor" strokeWidth="1.600" strokeLinecap="round" />
    </Glyph>
  );
}

function BankIcon() {
  return (
    <Glyph>
      <path d="M9.300 1.800a1.800 1.800 0 0 1 1.400 0l6.200 2.500q1.100.6 1.100 1.700v1.500q0 1-1 1H3q-1 0-1-1V6q0-1.100 1.100-1.700z" />
      <path d="M3.200 8h2.600v6H3.200zM7.200 8h2v6h-2zM10.800 8h2v6h-2zM14.200 8h2.600v6h-2.600z" />
      <rect x="2" y="13.500" width="16" height="4.500" rx="1.500" />
    </Glyph>
  );
}

function BarsIcon() {
  return (
    <Glyph fill="#bbb" stroke="#1a1a1a" strokeWidth="1.900">
      <rect x="2.900" y="10" width="3.200" height="7.500" rx="1.500" />
      <rect x="8.400" y="2.700" width="3.200" height="14.800" rx="1.500" />
      <rect x="13.900" y="6" width="3.200" height="11.500" rx="1.500" />
    </Glyph>
  );
}

function InboxIcon() {
  return (
    <Glyph>
      <rect width="19" height="19" rx="3" fill="#555" />
      <path d="M12.500 3.500c-2-1.200-5.200-.8-5 1.200.2 1.500 4 1.600 3.700 3.800-.3 1.700-2.800 2-4.700.9" fill="none" stroke="#fff" strokeWidth="2" />
      <path d="M1.500 13H6l3.500 3 3.500-3h4.500v3q0 1.500-1.500 1.500H3q-1.500 0-1.500-1.500z" fill="#ebebeb" />
    </Glyph>
  );
}

function StoreIcon() {
  return (
    <Glyph>
      <rect width="19" height="19" rx="3" fill="#555" />
      <g fill="none" stroke="#fff" strokeWidth="1.400">
        <path d="M4.500 3.500h10L16 7.500v1a1.700 1.700 0 0 1-3.200 0 1.700 1.700 0 0 1-3.300 0 1.700 1.700 0 0 1-3.300 0A1.700 1.700 0 0 1 3 8.500v-1z" />
        <path d="M3 7h13M4.500 10.500v5h3V12h4v3.500h3v-5" />
      </g>
    </Glyph>
  );
}

function GoogleIcon() {
  return (
    <Glyph>
      <rect width="19" height="19" rx="3" fill="#555" />
      <path d="M13.700 6.200A5.200 5.200 0 1 0 14.700 10H9.800" fill="none" stroke="#fff" strokeWidth="2.600" />
    </Glyph>
  );
}

function MetaIcon() {
  return <FaMeta className="size-[19px]" />;
}

function HyperspeedIcon() {
  return (
    <Glyph>
      <path d="M17.500 1c.5 5 .5 9-.8 12.500l.3 1.500-2 2.500-3 2-4-1.500-2.500-3-2-1 1.500-1.500L3.500 10c2-1 3.500-1.500 5-3.500 2-2.500 5-4.500 9-5.500z" />
    </Glyph>
  );
}

function MailIcon() {
  return (
    <Glyph>
      <rect width="19" height="19" rx="3" fill="#4a4a4a" />
      <rect x="2.500" y="5" width="14" height="10" fill="#e3e3e3" />
      <path d="M4 5l5.500 5 6-5M4.500 5v10" fill="none" stroke="#4a4a4a" strokeWidth="1.400" />
    </Glyph>
  );
}

function RocketIcon() {
  return (
    <Glyph>
      <rect width="19" height="19" rx="2.500" fill="#555" />
      <path d="M14.500 2.500l-3 6" stroke="#9a9a9a" strokeWidth="1.200" />
      <path d="M12.500 4.500a2.500 2.500 0 1 0 .6 2h-2" fill="none" stroke="#ddd" strokeWidth="1.300" />
      <path d="M3 8l4-4M5 10l2-2" stroke="#777" />
      <circle cx="15.500" cy="11" r="1.200" fill="#ccc" />
      <circle cx="13" cy="14" r=".9" fill="#aaa" />
      <circle cx="10" cy="16.500" r=".8" fill="#bbb" />
    </Glyph>
  );
}

function GearIcon() {
  return (
    <Glyph fill="none" stroke="currentColor">
      <path d="M10 3v14M4 6.500l12 7M16 6.500l-12 7" strokeWidth="4.200" strokeLinecap="round" />
      <circle cx="10" cy="10" r="4" strokeWidth="4" />
      <circle cx="10" cy="10" r="2.100" fill="#ebebeb" stroke="none" />
    </Glyph>
  );
}

function ChromeIcon() {
  return (
    <svg width="30" height="30" viewBox="0 0 48 48">
      <path d="M24 13h20.800a24 24 0 0 1-20.800 35l9.500-18.500z" fill="#fbbc04" />
      <path d="M3.200 12A24 24 0 0 0 24 48l9.500-18.500L14.500 29.500z" fill="#2c9c4b" />
      <path d="M3.200 12A24 24 0 0 1 44.800 13H24l-9.500 16.500z" fill="#e33b2e" />
      <circle cx="24" cy="24" r="11.500" fill="#fff" />
      <circle cx="24" cy="24" r="9" fill="#2f7de9" />
    </svg>
  );
}

function CopilotIcon() {
  return (
    <svg width="28" height="27" viewBox="0 0 28 27">
      <defs>
        <linearGradient id="cpA" x1="0" y1="0" x2="0" y2="1">
          <stop stopColor="#22b4f5" />
          <stop offset=".5" stopColor="#2d8fe0" />
          <stop offset=".75" stopColor="#8bc53f" />
          <stop offset="1" stopColor="#f4d318" />
        </linearGradient>
        <linearGradient id="cpB" x1="0" y1="0" x2="0" y2="1">
          <stop stopColor="#a35df2" />
          <stop offset=".55" stopColor="#f0679a" />
          <stop offset="1" stopColor="#fba24c" />
        </linearGradient>
      </defs>
      <path d="M8 1h9.500q2.500 0 3.300 2.500L21.500 6H18q-2 0-2.700 2.500L12 18.500H4Q-.5 18.500.6 14L4 4.500Q5.200 1 8 1z" fill="url(#cpA)" />
      <path d="M12 1h5.500q2.500 0 3.300 2.500L21.500 6H18q-2 0-2.700 2.500z" fill="#1f49cf" />
      <path d="M20 26h-9.500q-2.500 0-3.300-2.500L6.500 21H10q2 0 2.700-2.500L16 8.500h8q4.500 0 3.400 4.500L24 22.500Q22.800 26 20 26z" fill="url(#cpB)" />
      <path d="M6.500 21H10q2 0 2.700-2.500l1 7.500h-3.200q-2.500 0-3.300-2.500z" fill="#f4573b" />
    </svg>
  );
}

function EdgeIcon() {
  return (
    <svg width="30" height="30" viewBox="0 0 30 30">
      <defs>
        <linearGradient id="edgeA" x1="0" y1="0" x2="1" y2=".4">
          <stop stopColor="#1b9de2" />
          <stop offset=".55" stopColor="#35c4d8" />
          <stop offset="1" stopColor="#6de85c" />
        </linearGradient>
        <linearGradient id="edgeB" x1="0" y1="0" x2="0" y2="1">
          <stop stopColor="#1b8fd8" />
          <stop offset="1" stopColor="#0f6cc9" />
        </linearGradient>
      </defs>
      <path d="M0 15C0 6 6.500 0 15 0c9 0 15 6 15 13 0 4.500-3.500 7-7.500 7-3 0-5-1-5-2.300 0-1 1.300-1.500 1.300-4C18.800 10.500 15 8 10.500 8 5 8 1 11 0 15z" fill="url(#edgeA)" />
      <path d="M0 15C1 11 5 8 10.500 8c3 0 5.500 1 7 3-4-1-8 2.500-8 7.500 0 5.500 4 10 8.500 11.200-1 .2-2 .3-3 .3C6.500 30 0 23.500 0 15z" fill="url(#edgeB)" />
      <path d="M12.500 13c-2 1.500-3 3.500-3 5.500C9.500 25 15 30 20 29c3.500-1.200 6-3.500 7.500-6 .3-.7-.3-1-1-.7-5.500 2.500-14 .2-14-9.300z" fill="#144f9e" />
    </svg>
  );
}
